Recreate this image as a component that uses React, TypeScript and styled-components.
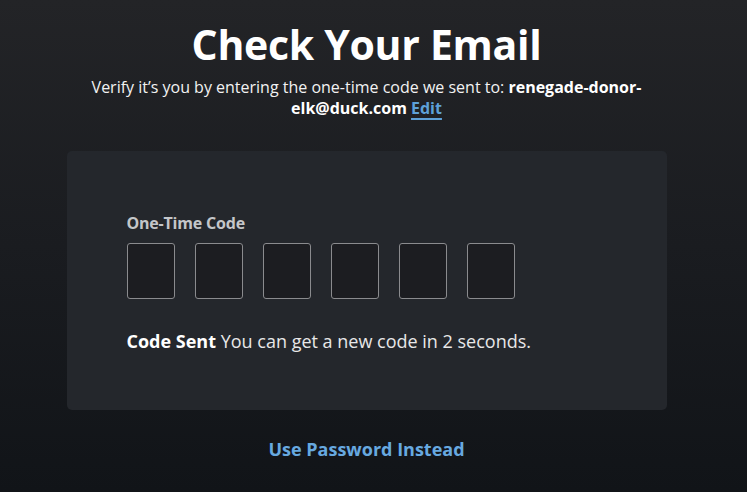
import styled, { createGlobalStyle } from 'styled-components';

const GlobalStyle = createGlobalStyle`
  html, body {
    margin: 0;
    padding: 0;
    height: 100%;
  }
  body {
    background: linear-gradient(180deg, #232427 0%, #1a1c20 50%, #111418 100%);
    font-family: "Open Sans", "Noto Sans", Arial, sans-serif;
    color: #fff;
  }
`;

const CODE_LENGTH = 6;

const App = () => (
  <>
    <GlobalStyle />
    <Page>
      <Title>Check Your Email</Title>
      <Subtitle>
        Verify it’s you by entering the one-time code we sent to:{' '}
        <Email>renegade-donor-elk@duck.com</Email> <EditLink href="#">Edit</EditLink>
      </Subtitle>
      <Card>
        <Label>One-Time Code</Label>
        <CodeRow>
          {Array.from({ length: CODE_LENGTH }, (_, i) => (
            <CodeInput key={i} maxLength={1} aria-label={`Digit ${i + 1}`} />
          ))}
        </CodeRow>
        <Status>
          <strong>Code Sent</strong> You can get a new code in 2 seconds.
        </Status>
      </Card>
      <AltLink href="#">Use Password Instead</AltLink>
    </Page>
  </>
);

export default App;

const Page = styled.main`
  display: flex;
  flex-direction: column;
  align-items: center;
  padding: 19px 14px 0 0;
`;

const Title = styled.h1`
  margin: 0;
  font-size: 41px;
  font-weight: 700;
  line-height: 50px;
  letter-spacing: -0.3px;
`;

const Subtitle = styled.p`
  margin: 8px 0 0;
  width: 580px;
  text-align: center;
  font-size: 16px;
  line-height: 21px;
  color: #f2f2f2;
`;

const Email = styled.strong`
  font-weight: 700;
  color: #fff;
`;

const EditLink = styled.a`
  color: #5ea1d8;
  font-weight: 700;
  text-decoration: underline;
  text-decoration-thickness: 2px;
  text-underline-offset: 4px;
`;

const Card = styled.section`
  box-sizing: border-box;
  width: 600px;
  height: 259px;
  margin-top: 32px;
  padding: 62px 60px 0;
  background: #24272c;
  border-radius: 5px;
`;

const Label = styled.div`
  font-size: 16px;
  font-weight: 700;
  line-height: 20px;
  color: #c4c6c9;
  letter-spacing: -0.2px;
`;

const CodeRow = styled.div`
  display: flex;
  gap: 20px;
  margin-top: 10px;
`;

const CodeInput = styled.input`
  box-sizing: border-box;
  width: 48px;
  height: 56px;
  padding: 0;
  background: #1c1d21;
  border: 1px solid #8a8b8e;
  border-radius: 3px;
  color: #fff;
  font-size: 24px;
  text-align: center;
  outline: none;
`;

const Status = styled.p`
  margin: 30px 0 0;
  font-size: 18px;
  line-height: 24px;
  color: #e8e8e8;

  strong {
    color: #fff;
  }
`;

const AltLink = styled.a`
  margin-top: 27px;
  font-size: 18px;
  line-height: 24px;
  font-weight: 700;
  color: #67a9e0;
  text-decoration: none;
`;
